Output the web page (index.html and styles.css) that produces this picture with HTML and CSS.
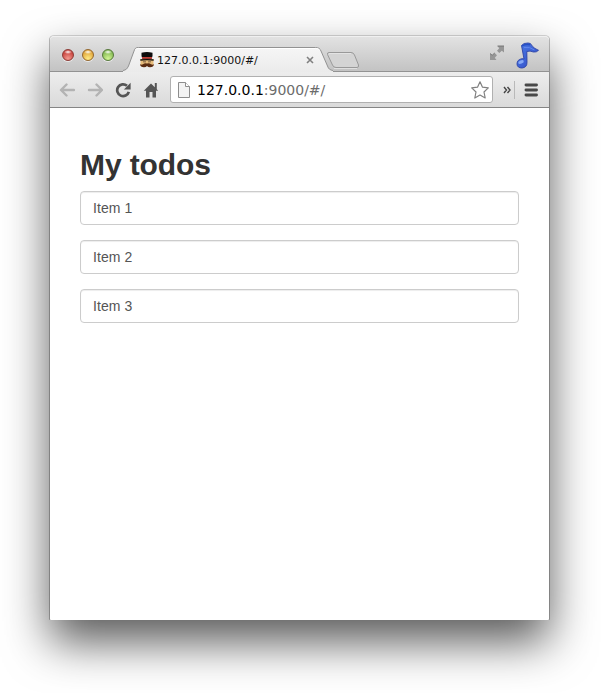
FILE: index.html
```html
<!DOCTYPE html>
<html lang="en">
<head>
<meta charset="utf-8">
<title>My todos</title>
<link rel="stylesheet" href="styles.css">
</head>
<body>
<div class="window">
  <header class="tabstrip">
    <div class="lights">
      <span class="light red"></span>
      <span class="light yellow"></span>
      <span class="light green"></span>
    </div>
    <div class="tab">
      <svg class="tab-shape" width="210" height="26" viewBox="0 0 210 26">
        <defs><linearGradient id="tabfill" x1="0" y1="0" x2="0" y2="1"><stop offset="0" stop-color="#f6f6f6"/><stop offset="1" stop-color="#ebebeb"/></linearGradient></defs>
        <path d="M-1 25.500V24.500C2 24 3 23 4.500 20L10 5C11 2 12 1.500 14.500 1.500H191.500C194.500 1.500 196 2.500 197 5L203.500 20C204.500 23 206 24 209 24.500V26H-1Z" fill="url(#tabfill)"/>
        <path d="M-1 24.500C2 24 3 23 4.500 20L10 5C11 2 12 1.500 14.500 1.500H191.500C194.500 1.500 196 2.500 197 5L203.500 20C204.500 23 206 24 209 24.500" fill="none" stroke="#929292"/>
        <path d="M11.500 3.500Q12.500 2.500 14.500 2.500H191.500Q194.500 2.500 195.500 4" fill="none" stroke="#fff"/>
      </svg>
      <svg class="favicon" width="14" height="16" viewBox="0 0 14 16">
        <path d="M.5 7H13.500V13.500H.5Z" fill="#e8bd7c"/>
        <path d="M1.500 .8Q7-.8 12.500 .8V4L11.500 7H2.500L1.500 4Z" fill="#0c0c0c"/>
        <path d="M2 5H12V6.800H2Z" fill="#c04038"/>
        <path d="M.3 7.300Q7 6.500 13.700 7.300V8.700Q7 7.900 .3 8.700Z" fill="#151210"/>
        <path d="M3 9.500H6V10.200H3ZM8 9.500H11V10.200H8Z" fill="#57402f"/>
        <path d="M7 11.500Q4.500 10.700 3 12.300Q1.500 13 0 12.300Q.3 15.300 4 15.300Q6 15.300 7 14Q8 15.300 10 15.300Q13.700 15.300 14 12.300Q12.500 13 11 12.300Q9.500 10.700 7 11.500Z" fill="#5b2c12"/>
      </svg>
      <span class="tab-title">127.0.0.1:9000/#/</span>
      <svg class="close" width="8" height="8" viewBox="0 0 8 8"><path d="M1 1L7 7M7 1L1 7" stroke="#808080" stroke-width="1.600"/></svg>
    </div>
    <svg class="newtab" width="34" height="18" viewBox="0 0 34 18">
      <path d="M3 1.500H25Q27.500 1.500 28.500 4L32.500 14Q33 16.500 31 16.500H10Q7.500 16.500 6.500 14L1.500 3.500Q1 1.500 3 1.500Z" fill="#d4d4d4" stroke="#999"/>
      <path d="M3 2.500H25M8 17.500H31" stroke="#e9e9e9" fill="none" opacity=".7"/>
    </svg>
    <svg class="expand" width="16" height="16" viewBox="0 0 16 16">
      <path d="M8.500 1H15V7.500L12.800 5.800L10.300 8L8 5.700L10.200 3.200ZM1 8.500L3.200 10.200L5.700 8L8 10.300L5.800 12.800L7.500 15H1Z" fill="#969696"/>
      <path d="M8.500 1H15M1 8.500L3.200 10.200L5.700 8" stroke="#737373" stroke-width=".9" fill="none"/>
    </svg>
    <svg class="note" width="24" height="27" viewBox="0 0 24 27">
      <defs><linearGradient id="blue" x1="0" y1="0" x2="1" y2="1"><stop offset="0" stop-color="#4f7de6"/><stop offset="1" stop-color="#2c48c4"/></linearGradient></defs>
      <path d="M5.500 3.500Q7.500 .8 12 1Q15 1 15.500 3Q17.500 6.500 22.500 8.300Q20.500 10.500 17.500 10Q14 8.500 10.800 9.500L11 20.500Q11 25.500 6 26Q1.300 26 1 22Q1 17.500 6 16.700Q7.300 16.700 8 17Z" fill="url(#blue)" stroke="#2d43a6" stroke-width=".9" stroke-linejoin="round"/>
      <path d="M6 3.800Q10 2 14 2.800" fill="none" stroke="#254fc6" stroke-width="1.400"/>
      <ellipse cx="5" cy="20" rx="2.900" ry="1.700" fill="#86a9f7" transform="rotate(-20 5 20)"/>
      <path d="M8 5.500Q14 4.500 18.500 8" fill="none" stroke="#5f86ee"/>
    </svg>
  </header>
  <nav class="toolbar">
    <svg class="back" width="16" height="14" viewBox="0 0 16 14"><path d="M7.500 1.500L2 7L7.500 12.500M2.500 7H15" fill="none" stroke="#b3b3b3" stroke-width="2.400" stroke-linecap="round" stroke-linejoin="round"/></svg>
    <svg class="forward" width="16" height="14" viewBox="0 0 16 14"><path d="M9.500 1.500L15 7L9.500 12.500M14.500 7H2" fill="none" stroke="#b3b3b3" stroke-width="2.400" stroke-linecap="round" stroke-linejoin="round"/></svg>
    <svg class="reload" width="16" height="16" viewBox="0 0 16 16"><path d="M12 3.800A5.900 5.900 0 1 0 13.800 9.800" fill="none" stroke="#555" stroke-width="2.700"/><path d="M15.600 .8V7.500H8.900Z" fill="#555"/></svg>
    <svg class="home" width="16" height="16" viewBox="0 0 16 16"><path d="M8 1.500L.8 8.800H3V15.500H6.500V10H9.500V15.500H13V8.800H15.200L13.800 7.300V1H11.800V5.200Z" fill="#555"/></svg>
    <div class="omnibox">
      <svg class="page" width="12" height="16" viewBox="0 0 12 16"><path d="M.5 .5H7.500L11.500 4.500V15.500H.5Z" fill="#f3f3f3" stroke="#8d8d8d"/><path d="M7.500 .5V4.500H11.500" fill="#fff" stroke="#8d8d8d"/></svg>
      <span class="url">127.0.0.1<span class="path">:9000/#/</span></span>
      <svg class="star" width="18" height="18" viewBox="0 0 18 18"><path d="M9 .8L11.500 6.200L17.300 6.900L13 11L14.200 17L9 14L3.800 17L5 11L.7 6.900L6.500 6.200Z" fill="#fff" stroke="#808080" stroke-width="1.200" stroke-linejoin="round"/></svg>
    </div>
    <svg class="more" width="8" height="8" viewBox="0 0 8 8"><path d="M1 1L3.500 4L1 7M4.500 1L7 4L4.500 7" fill="none" stroke="#444" stroke-width="1.400"/></svg>
    <span class="divider"></span>
    <svg class="menu" width="14" height="14" viewBox="0 0 14 14"><path d="M2 2H12.500M2 7H12.500M2 12H12.500" stroke="#484848" stroke-width="2.900" stroke-linecap="round"/></svg>
  </nav>
  <main class="content">
    <h1>My todos</h1>
    <div class="item">Item 1</div>
    <div class="item">Item 2</div>
    <div class="item">Item 3</div>
  </main>
</div>
</body>
</html>
```
FILE: styles.css
```css
* { box-sizing: border-box; }
body {
  margin: 0;
  height: 693px;
  padding: 36px 52px 0 50px;
  background: #fff;
  overflow: hidden;
}
svg { display: block; flex: none; }
.window {
  height: 584px;
  display: flex;
  flex-direction: column;
  background: #fff;
  border-radius: 4px 4px 1px 1px;
  box-shadow: -1px 0 rgba(0, 0, 0, .25), 1px 0 rgba(0, 0, 0, .25), 0 -1px rgba(0, 0, 0, .15), 0 22px 46px rgba(0, 0, 0, .65);
}
.tabstrip {
  height: 36px;
  flex: none;
  display: flex;
  align-items: flex-start;
  background: linear-gradient(#e3e3e3, #c3c3c3);
  border-radius: 4px 4px 0 0;
  border-bottom: 1px solid #929292;
  box-shadow: inset 0 1px #f0f0f0;
}
.lights {
  display: flex;
  gap: 8px;
  padding: 13px 0 0 12px;
  width: 74px;
}
.light {
  width: 12px;
  height: 12px;
  border-radius: 50%;
  border: 1px solid;
  box-shadow: 0 1px 0 rgba(255, 255, 255, .6);
}
.red {
  border-color: #8e3a35;
  background: radial-gradient(ellipse 4px 2px at 50% 20%, #fff, transparent), radial-gradient(circle at 50% 85%, #f39a90, #c9443e 70%);
}
.yellow {
  border-color: #94672c;
  background: radial-gradient(ellipse 4px 2px at 50% 20%, #fff, transparent), radial-gradient(circle at 50% 85%, #ffeb85, #dfa136 75%);
}
.green {
  border-color: #56793a;
  background: radial-gradient(ellipse 4px 2px at 50% 20%, #fff, transparent), radial-gradient(circle at 50% 85%, #d2f594, #80b650 75%);
}
.tab {
  position: relative;
  width: 203px;
  height: 26px;
  margin-top: 10px;
  padding: 6px 13px 0 16px;
  display: flex;
  align-items: flex-start;
}
.tab > * { position: relative; }
.tab .tab-shape { position: absolute; left: 0; top: 0; overflow: visible; }
.tab-title {
  margin: 1px auto 0 3px;
  font: 11px/16px "DejaVu Sans", sans-serif;
  color: #111;
}
.close { margin: 4px 0 0; }
.newtab { margin: 15px auto 0 -1px; }
.expand { margin: 9px 11px 0 0; }
.note { margin: 6px 9px 0 0; }
.toolbar {
  height: 36px;
  flex: none;
  display: flex;
  align-items: center;
  padding: 0 11px 0 9px;
  background: linear-gradient(#ededed, #dadada);
  border-bottom: 1px solid #858585;
}
.back, .forward { margin-right: 12px; }
.home { margin: 0 11px 0 12px; }
.omnibox {
  flex: 1;
  height: 27px;
  display: flex;
  align-items: center;
  padding: 0 3px 0 7px;
  background: #fff;
  border: 1px solid #b0b0b0;
  border-radius: 3px;
}
.url {
  margin: 0 auto 0 7px;
  font: 14px/20px "DejaVu Sans", sans-serif;
  color: #000;
}
.path { color: #6c6c6c; }
.more { margin: 0 3px 0 10px; }
.divider { width: 1px; height: 18px; background: #b9b9b9; margin-right: 9px; }
.content {
  flex: 1;
  padding: 40px 30px 0;
  color: #333;
  font-family: "Liberation Sans", Arial, sans-serif;
}
h1 { margin: 0 0 10px; font-size: 30px; line-height: 33px; letter-spacing: -.1px; }
.item {
  height: 34px;
  margin-bottom: 15px;
  padding: 6px 12px;
  font-size: 14px;
  line-height: 20px;
  letter-spacing: .1px;
  color: #555;
  border: 1px solid #ccc;
  border-radius: 4px;
  box-shadow: inset 0 1px 1px rgba(0, 0, 0, .075);
}
```
